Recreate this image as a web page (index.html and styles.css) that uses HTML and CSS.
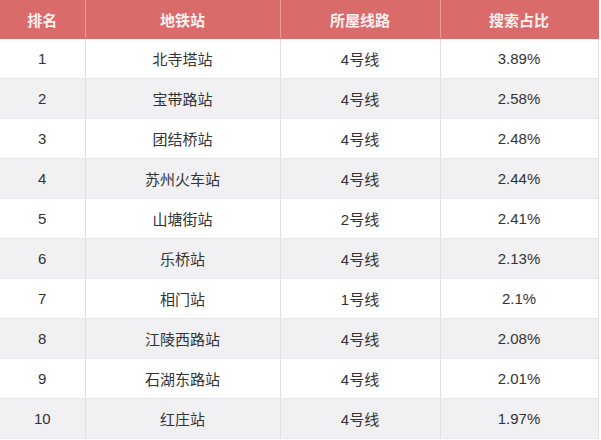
FILE: index.html
```html
<!DOCTYPE html>
<html lang="zh">
<head>
<meta charset="utf-8">
<link rel="stylesheet" href="styles.css">
</head>
<body>
<table class="rank">
  <colgroup>
    <col class="c1"><col class="c2"><col class="c3"><col class="c4">
  </colgroup>
  <thead>
    <tr><th>排名</th><th>地铁站</th><th>所屋线路</th><th>搜索占比</th></tr>
  </thead>
  <tbody>
    <tr><td>1</td><td>北寺塔站</td><td>4号线</td><td>3.89%</td></tr>
    <tr><td>2</td><td>宝带路站</td><td>4号线</td><td>2.58%</td></tr>
    <tr><td>3</td><td>团结桥站</td><td>4号线</td><td>2.48%</td></tr>
    <tr><td>4</td><td>苏州火车站</td><td>4号线</td><td>2.44%</td></tr>
    <tr><td>5</td><td>山塘街站</td><td>2号线</td><td>2.41%</td></tr>
    <tr><td>6</td><td>乐桥站</td><td>4号线</td><td>2.13%</td></tr>
    <tr><td>7</td><td>相门站</td><td>1号线</td><td>2.1%</td></tr>
    <tr><td>8</td><td>江陵西路站</td><td>4号线</td><td>2.08%</td></tr>
    <tr><td>9</td><td>石湖东路站</td><td>4号线</td><td>2.01%</td></tr>
    <tr><td>10</td><td>红庄站</td><td>4号线</td><td>1.97%</td></tr>
  </tbody>
</table>
</body>
</html>
```

FILE: styles.css
```css
html, body {
  margin: 0;
  padding: 0;
  background: #ffffff;
}
body {
  font-family: "Liberation Sans", "Noto Sans CJK SC", sans-serif;
  font-size: 15px;
  color: #333333;
}
.rank {
  width: 598px;
  border-collapse: collapse;
  table-layout: fixed;
}
.c1 { width: 85px; }
.c2 { width: 195px; }
.c3 { width: 160px; }
.c4 { width: 158px; }
.rank th {
  height: 38px;
  padding: 0;
  background: #d96b6b;
  color: #fdf0ef;
  font-weight: bold;
  text-align: center;
  border-left: 1px solid #e89a98;
  border-bottom: 1px solid #d96b6b;
}
.rank th:first-child { border-left: none; }
.rank th:last-child { border-right: 1px solid #d96b6b; }
.rank td {
  height: 39px;
  padding: 0;
  text-align: center;
  border-left: 1px solid #e0dfe2;
  border-bottom: 1px solid #e6e5e8;
}
.rank td:first-child { border-left: none; }
.rank td:last-child { border-right: 1px solid #e0dfe2; }
.rank tbody tr:nth-child(even) td {
  background: #f1f0f2;
}
```
